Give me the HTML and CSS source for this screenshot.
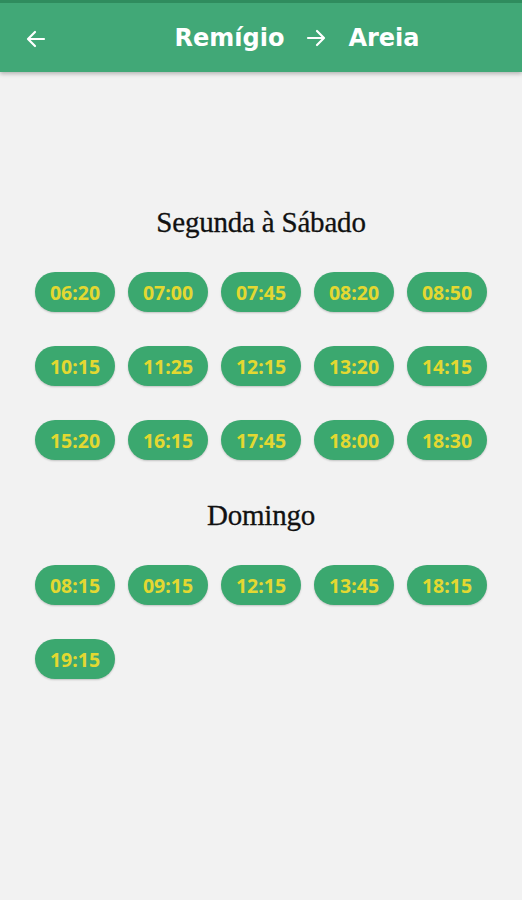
FILE: index.html
```html
<!DOCTYPE html>
<html lang="pt">
<head>
<meta charset="utf-8">
<title>Remígio → Areia</title>
<link rel="stylesheet" href="styles.css">
</head>
<body>
<header class="appbar">
  <div class="nav">
    <svg width="24" height="24" viewBox="0 0 24 24" aria-hidden="true"><path d="M20 12H5M11 5l-7 7 7 7" fill="none" stroke="#fff" stroke-width="2.2" stroke-linecap="round" stroke-linejoin="round"/></svg>
  </div>
  <h1 class="title">
    <span>Remígio</span>
    <svg class="arrow" width="24" height="24" viewBox="0 0 24 24" aria-hidden="true"><path d="M4 12h15M13 5l7 7-7 7" fill="none" stroke="#fff" stroke-width="2.2" stroke-linecap="round" stroke-linejoin="round"/></svg>
    <span>Areia</span>
  </h1>
</header>
<main class="content">
  <section class="group">
    <h2 class="day">Segunda à Sábado</h2>
    <div class="times">
      <span class="pill">06:20</span><span class="pill">07:00</span><span class="pill">07:45</span><span class="pill">08:20</span><span class="pill">08:50</span>
      <span class="pill">10:15</span><span class="pill">11:25</span><span class="pill">12:15</span><span class="pill">13:20</span><span class="pill">14:15</span>
      <span class="pill">15:20</span><span class="pill">16:15</span><span class="pill">17:45</span><span class="pill">18:00</span><span class="pill">18:30</span>
    </div>
  </section>
  <section class="group">
    <h2 class="day">Domingo</h2>
    <div class="times">
      <span class="pill">08:15</span><span class="pill">09:15</span><span class="pill">12:15</span><span class="pill">13:45</span><span class="pill">18:15</span>
      <span class="pill">19:15</span>
    </div>
  </section>
</main>
</body>
</html>
```

FILE: styles.css
```css
html, body {
  margin: 0;
  padding: 0;
}
body {
  background: #f2f2f2;
  width: 522px;
  min-height: 900px;
  font-family: "Noto Sans", "Liberation Sans", sans-serif;
}
.appbar {
  height: 69px;
  border-top: 3px solid #2f8c5e;
  background: #41a877;
  display: flex;
  align-items: center;
  box-shadow: 0 2px 4px rgba(0,0,0,0.25);
}
.nav {
  width: 72px;
  display: flex;
  justify-content: center;
  align-items: center;
  padding-top: 2px;
}
.title {
  flex: 1;
  margin: 0;
  display: flex;
  justify-content: center;
  align-items: center;
  gap: 20px;
  color: #fff;
  font-family: "DejaVu Sans", sans-serif;
  font-weight: 700;
  font-size: 24px;
  letter-spacing: 0;
}
.arrow {
  display: block;
}
.content {
  padding-top: 134px;
  display: flex;
  flex-direction: column;
  align-items: center;
}
.group {
  display: flex;
  flex-direction: column;
  align-items: center;
  margin-bottom: 39px;
}
.day {
  margin: 0 0 34px;
  height: 32px;
  line-height: 32px;
  font-family: "Liberation Serif", serif;
  font-weight: 400;
  font-size: 29px;
  color: #111;
  letter-spacing: -0.2px;
  -webkit-text-stroke: 0.3px #111;
}
.times {
  display: grid;
  grid-template-columns: repeat(5, 80px);
  column-gap: 13px;
  row-gap: 34px;
  width: 452px;
}
.pill {
  height: 40px;
  border-radius: 20px;
  background: #3ba86f;
  color: #e3d831;
  font-family: "Noto Sans", "Liberation Sans", sans-serif;
  font-weight: 700;
  font-size: 19.5px;
  display: flex;
  align-items: center;
  justify-content: center;
  box-shadow: 0 1px 2px rgba(0,0,0,0.2);
}
```
